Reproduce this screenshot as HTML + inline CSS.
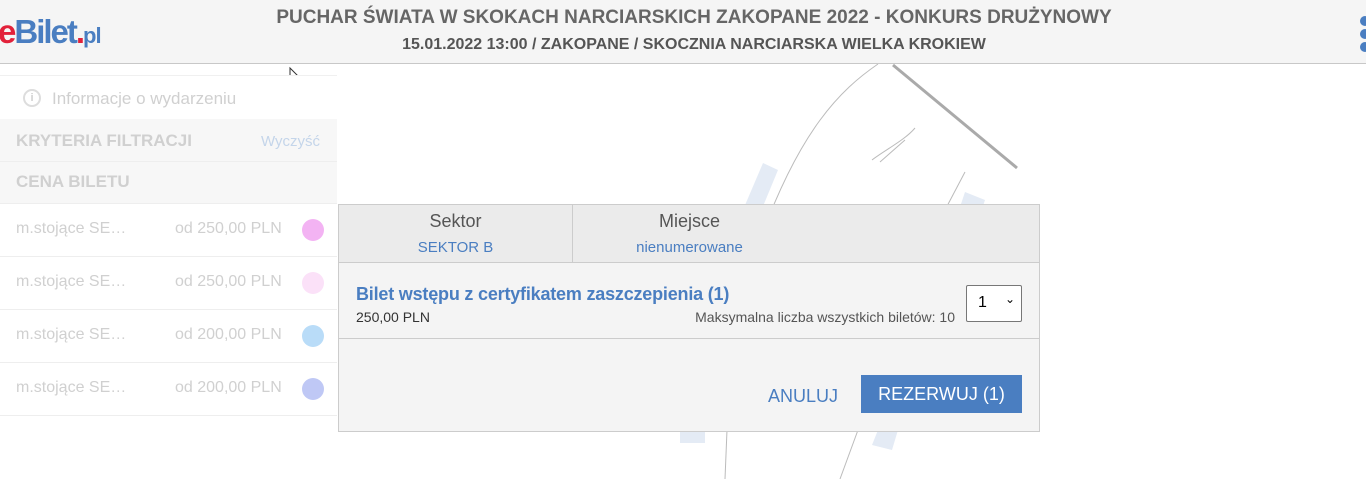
<!DOCTYPE html>
<html><head><meta charset="utf-8"><style>
body{margin:0;width:1366px;height:479px;overflow:hidden;background:#fff;font-family:"Liberation Sans",sans-serif;position:relative}
.hdr{position:absolute;left:0;top:0;width:1366px;height:63px;background:#f5f5f5;border-bottom:1px solid #c8c8c8}
.logo{position:absolute;left:-2px;top:13px;font-size:33px;font-weight:bold;letter-spacing:-2px;color:#4a7ec1}
.logo .e{color:#e2213a}.logo .d{color:#e2213a}.logo .pl{font-size:22px;letter-spacing:-1px}
.t1{position:absolute;left:0;width:1388px;text-align:center;top:7px;font-size:19px;font-weight:bold;color:#666}
.t2{position:absolute;left:0;width:1388px;text-align:center;top:36px;font-size:16px;font-weight:bold;color:#555}
.dots{position:absolute;left:1360px;top:16px}
.dots i{display:block;width:10px;height:10px;border-radius:5px;background:#4a7ec1;margin-bottom:3px}
.side{position:absolute;left:0;top:75px;width:337px;color:#d0d0d0}
.row{position:absolute;left:0;width:337px;border-bottom:1px solid #eee;background:#f7f7f7}
.map{position:absolute;left:0;top:0}
.dlg{position:absolute;left:338px;top:204px;width:700px;height:226px;border:1px solid #ccc;background:#f4f4f4}
.top{height:57px;background:#ebebeb;border-bottom:1px solid #ccc;position:relative}
.lbl{position:absolute;font-size:18px;color:#555;text-align:center}
.val{position:absolute;font-size:15px;color:#4a7ec1;text-align:center}
</style></head><body>
<svg class="map" width="1366" height="479">
<g fill="#e4ebf5"><polygon points="763,163 778,170 745,250 728,245"/><polygon points="965,192 985,200 975,230 955,222"/><polygon points="680,430 705,430 705,443 680,443"/><polygon points="878,430 898,430 892,450 872,445"/></g>
<g fill="none" stroke="#bbb"><path d="M878,64 C840,90 800,130 760,240"/><path d="M965,172 L945,210"/><path d="M727,430 L725,479"/><path d="M858,430 L840,479"/><path d="M872,160 C885,150 905,140 915,128 M880,162 L905,140"/></g>
<line x1="893" y1="65" x2="1017" y2="168" stroke="#aaa" stroke-width="3"/>
<path d="M290,68 L290,85 L294,81 L298,88 L300,87 L297,80 L302,80 Z" fill="#fff" stroke="#333"/>
</svg>
<div class="hdr">
<div class="logo"><span class="e">e</span>Bilet<span class="d">.</span><span class="pl">pl</span></div>
<div class="t1">PUCHAR ŚWIATA W SKOKACH NARCIARSKICH ZAKOPANE 2022 - KONKURS DRUŻYNOWY</div>
<div class="t2">15.01.2022 13:00 / ZAKOPANE / SKOCZNIA NARCIARSKA WIELKA KROKIEW</div>
<div class="dots"><i></i><i></i><i></i></div>
</div>
<div class="side">
<div class="row" style="top:0;height:43px;background:#fff;border-top:1px solid #f0f0f0"><span style="position:absolute;left:23px;top:13px;width:14px;height:14px;border:2px solid #ddd;border-radius:50%;font-size:11px;text-align:center;line-height:14px;font-weight:bold">i</span><span style="position:absolute;left:52px;top:13px;font-size:17px">Informacje o wydarzeniu</span></div>
<div class="row" style="top:44px;height:42px"><b style="position:absolute;left:16px;top:12px;font-size:17px">KRYTERIA FILTRACJI</b><span style="position:absolute;right:17px;top:14px;font-size:15px;color:#c4d5ea">Wyczyść</span></div>
<div class="row" style="top:87px;height:41px"><b style="position:absolute;left:16px;top:10px;font-size:17px">CENA BILETU</b></div>
<div class="row" style="top:129px;height:52px;background:#fff"><span style="position:absolute;left:16px;top:16px;font-size:16px">m.stojące SE…</span><span style="position:absolute;left:175px;top:16px;font-size:16px">od 250,00 PLN</span><i style="position:absolute;left:302px;top:15px;width:22px;height:22px;border-radius:50%;background:#f3b3f3"></i></div>
<div class="row" style="top:182px;height:52px;background:#fff"><span style="position:absolute;left:16px;top:16px;font-size:16px">m.stojące SE…</span><span style="position:absolute;left:175px;top:16px;font-size:16px">od 250,00 PLN</span><i style="position:absolute;left:302px;top:15px;width:22px;height:22px;border-radius:50%;background:#fbe1f8"></i></div>
<div class="row" style="top:235px;height:52px;background:#fff"><span style="position:absolute;left:16px;top:16px;font-size:16px">m.stojące SE…</span><span style="position:absolute;left:175px;top:16px;font-size:16px">od 200,00 PLN</span><i style="position:absolute;left:302px;top:15px;width:22px;height:22px;border-radius:50%;background:#b9dcf8"></i></div>
<div class="row" style="top:288px;height:52px;background:#fff"><span style="position:absolute;left:16px;top:16px;font-size:16px">m.stojące SE…</span><span style="position:absolute;left:175px;top:16px;font-size:16px">od 200,00 PLN</span><i style="position:absolute;left:302px;top:15px;width:22px;height:22px;border-radius:50%;background:#bfc8f5"></i></div>
</div>
<div class="dlg">
<div class="top">
<div class="lbl" style="left:0;width:233px;top:6px">Sektor</div>
<div class="val" style="left:0;width:233px;top:34px">SEKTOR B</div>
<div style="position:absolute;left:233px;top:0;width:1px;height:57px;background:#ccc"></div>
<div class="lbl" style="left:234px;width:233px;top:6px">Miejsce</div>
<div class="val" style="left:234px;width:233px;top:34px">nienumerowane</div>
</div>
<div style="position:relative;height:75px;border-bottom:1px solid #ccc">
<div style="position:absolute;left:17px;top:21px;font-size:18px;font-weight:bold;color:#4a7ec1;letter-spacing:-0.2px">Bilet wstępu z certyfikatem zaszczepienia (1)</div>
<div style="position:absolute;left:17px;top:46px;font-size:14px;color:#333">250,00 PLN</div>
<div style="position:absolute;right:84px;top:46px;font-size:14px;color:#555">Maksymalna liczba wszystkich biletów: 10</div>
<div style="position:absolute;left:627px;top:22px;width:54px;height:35px;border:1px solid #777;border-radius:2px;background:#fff;font-size:16px"><span style="position:absolute;left:11px;top:8px">1</span><span style="position:absolute;left:38px;top:6px;font-size:12px">⌄</span></div>
</div>
<div style="position:absolute;left:429px;top:181px;font-size:18px;color:#4a7ec1">ANULUJ</div>
<div style="position:absolute;left:522px;top:170px;width:161px;height:38px;background:#4a7ec1;color:#fff;font-size:18px;text-align:center;line-height:38px">REZERWUJ (1)</div>
</div>
</body></html>
